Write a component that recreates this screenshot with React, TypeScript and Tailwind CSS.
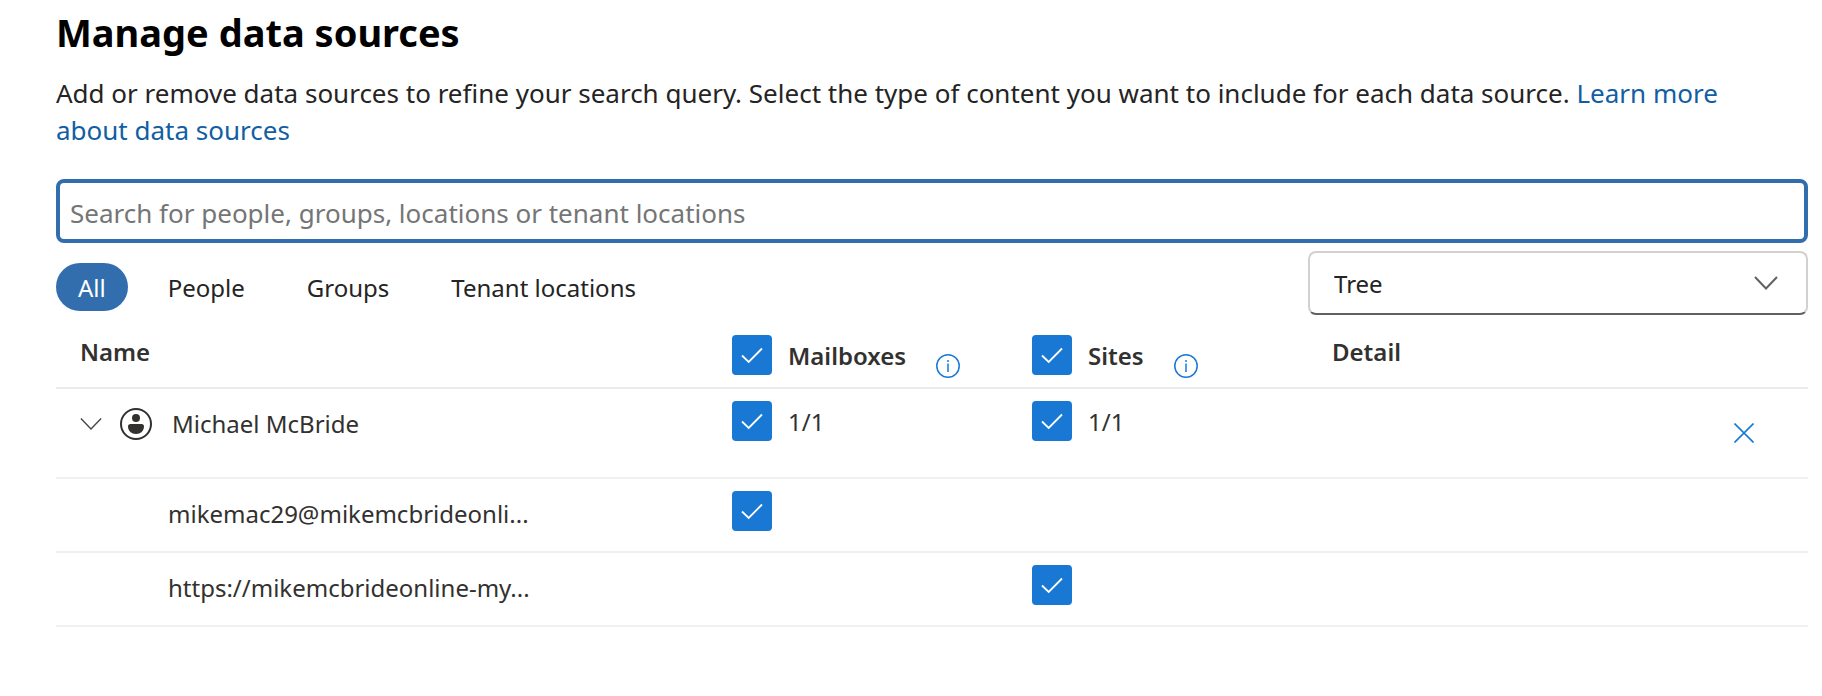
import React, { useState } from 'react';

type Kind = 'mailbox' | 'site';

interface Source {
  id: string;
  label: string;
  kind: Kind;
}

const filters = ['All', 'People', 'Groups', 'Tenant locations'];

const sources: Source[] = [
  { id: 'mailbox', label: 'mikemac29@mikemcbrideonli...', kind: 'mailbox' },
  { id: 'site', label: 'https://mikemcbrideonline-my...', kind: 'site' },
];

interface CheckboxProps {
  label: string;
  checked: boolean;
  onChange: (checked: boolean) => void;
  children?: React.ReactNode;
}

function Checkbox({ label, checked, onChange, children }: CheckboxProps) {
  return (
    <label className="inline-flex items-center gap-4 align-top">
      <span className="grid size-10 shrink-0">
        <input
          type="checkbox"
          aria-label={label}
          checked={checked}
          onChange={(e) => onChange(e.target.checked)}
          className="col-start-1 row-start-1 size-10 appearance-none rounded-sm border-2 border-[#1878d4] bg-white checked:bg-[#1878d4]"
        />
        {checked && (
          <svg viewBox="0 0 40 40" className="pointer-events-none col-start-1 row-start-1 size-10" fill="none" stroke="white" strokeWidth="1.8">
            <path d="M10 20.5l6.7 6.5L30 13.5" />
          </svg>
        )}
      </span>
      {children && <span className="pt-0.5 leading-[38px]">{children}</span>}
    </label>
  );
}

function Chevron({ className }: { className: string }) {
  return (
    <svg viewBox="0 0 24 14" className={className} fill="none" stroke="currentColor">
      <path d="M1 1l11 11.5L23 1" />
    </svg>
  );
}

function InfoButton({ label }: { label: string }) {
  return (
    <button type="button" aria-label={label} className="mt-[22px] text-[#1878d4]">
      <svg viewBox="0 0 24 24" className="size-6" fill="none" stroke="currentColor" strokeWidth="1.5">
        <circle cx="12" cy="12" r="11.2" />
        <path d="M12 9.5v8.5" />
        <circle cx="12" cy="7" r="1" fill="currentColor" stroke="none" />
      </svg>
    </button>
  );
}

function PersonIcon() {
  return (
    <svg viewBox="0 0 32 32" className="size-8 text-[#323130]" fill="currentColor">
      <circle cx="16" cy="16" r="15" fill="none" stroke="currentColor" strokeWidth="2" />
      <circle cx="16" cy="10" r="4" />
      <path d="M10.5 16h11a2.5 2.5 0 0 1 2.5 2.5C24 23 20.5 26 16 26s-8-3-8-7.5A2.5 2.5 0 0 1 10.5 16z" />
    </svg>
  );
}

export default function App() {
  const [filter, setFilter] = useState('All');
  const [expanded, setExpanded] = useState(true);
  const [selected, setSelected] = useState<Record<Kind, boolean>>({ mailbox: true, site: true });

  const toggle = (kind: Kind) => (checked: boolean) => {
    setSelected(prev => ({ ...prev, [kind]: checked }));
  };

  return (
    <main className="bg-white pr-3.5 pl-14 pt-2 font-['Noto_Sans',sans-serif] text-[26px] text-[#242424]">
      <h1 className="text-[38px] leading-[48px] font-bold text-black">Manage data sources</h1>
      <p className="mt-[19px] pr-8 leading-[37px]">
        Add or remove data sources to refine your search query. Select the type of content you want to include for each data source.{' '}
        <a href="#learn-more" className="text-[#115ea3]">Learn more about data sources</a>
      </p>

      <input
        type="text"
        aria-label="Search data sources"
        placeholder="Search for people, groups, locations or tenant locations"
        className="mt-[30px] block h-16 w-full rounded-lg border-4 border-[#326dad] px-2.5 pt-1 outline-none placeholder:text-[#757575]"
      />

      <div className="mt-2 flex items-start justify-between">
        <div className="mt-3 flex gap-[18px]">
          {filters.map((name) => (
            <button
              key={name}
              type="button"
              aria-pressed={filter === name}
              onClick={() => setFilter(name)}
              className={`h-12 rounded-full px-[22px] pt-0.5 text-[24px] ${filter === name ? 'bg-[#326dad] text-white' : ''}`}
            >
              {name}
            </button>
          ))}
        </div>
        <div className="grid w-[500px] items-center">
          <select
            aria-label="View"
            className="col-start-1 row-start-1 h-16 appearance-none rounded-lg border-2 border-[#d1d1d1] border-b-[#616161] bg-white px-6 pt-0.5 text-[24px]"
          >
            <option>Tree</option>
            <option>List</option>
          </select>
          <Chevron className="pointer-events-none col-start-1 row-start-1 mr-[30px] h-3.5 w-6 justify-self-end stroke-2 text-[#616161]" />
        </div>
      </div>

      <table className="w-full table-fixed text-left text-[24px] text-[#323130]">
        <thead>
          <tr className="h-[73px] border-b-2 border-[#ebebeb] align-top leading-10">
            <th className="w-[656px] pt-[17px] pl-6 font-semibold">Name</th>
            <th className="w-[300px] pt-5 pl-5 font-semibold">
              <div className="flex h-10 items-center gap-[30px]">
                <Checkbox label="All mailboxes" checked={selected.mailbox} onChange={toggle('mailbox')}>Mailboxes</Checkbox>
                <InfoButton label="About mailboxes" />
              </div>
            </th>
            <th className="w-[300px] pt-5 pl-5 font-semibold">
              <div className="flex h-10 items-center gap-[30px]">
                <Checkbox label="All sites" checked={selected.site} onChange={toggle('site')}>Sites</Checkbox>
                <InfoButton label="About sites" />
              </div>
            </th>
            <th className="pt-[17px] pl-5 font-semibold">Detail</th>
          </tr>
        </thead>
        <tbody>
          <tr className="h-[90px] border-b-2 border-[#f0f0f0] align-top leading-10">
            <td className="pt-[15px] pl-6">
              <div className="flex items-center">
                <button type="button" aria-label="Show sources" aria-expanded={expanded} onClick={() => setExpanded(!expanded)}>
                  <Chevron className="h-3.5 w-[22px] stroke-[1.5] text-[#484644]" />
                </button>
                <span className="mr-5 ml-[18px]">
                  <PersonIcon />
                </span>
                Michael McBride
              </div>
            </td>
            <td className="pt-3 pl-5">
              <Checkbox label="Michael McBride mailboxes" checked={selected.mailbox} onChange={toggle('mailbox')}>
                {selected.mailbox ? 1 : 0}/1
              </Checkbox>
            </td>
            <td className="pt-3 pl-5">
              <Checkbox label="Michael McBride sites" checked={selected.site} onChange={toggle('site')}>
                {selected.site ? 1 : 0}/1
              </Checkbox>
            </td>
            <td className="pt-[34px] pr-[54px]">
              <button type="button" aria-label="Remove Michael McBride" className="ml-auto block text-[#1878d4]">
                <svg viewBox="0 0 20 20" className="size-5" fill="none" stroke="currentColor" strokeWidth="1.6">
                  <path d="M.5.5l19 19M19.5.5l-19 19" />
                </svg>
              </button>
            </td>
          </tr>
          {expanded && sources.map((source) => (
            <tr key={source.id} className="h-[74px] border-b-2 border-[#f0f0f0] align-top leading-10">
              <td className="pt-[15px] pl-28">{source.label}</td>
              <td className="pt-3 pl-5">
                {source.kind === 'mailbox' && <Checkbox label={source.label} checked={selected.mailbox} onChange={toggle('mailbox')} />}
              </td>
              <td className="pt-3 pl-5">
                {source.kind === 'site' && <Checkbox label={source.label} checked={selected.site} onChange={toggle('site')} />}
              </td>
              <td />
            </tr>
          ))}
        </tbody>
      </table>
    </main>
  );
}
